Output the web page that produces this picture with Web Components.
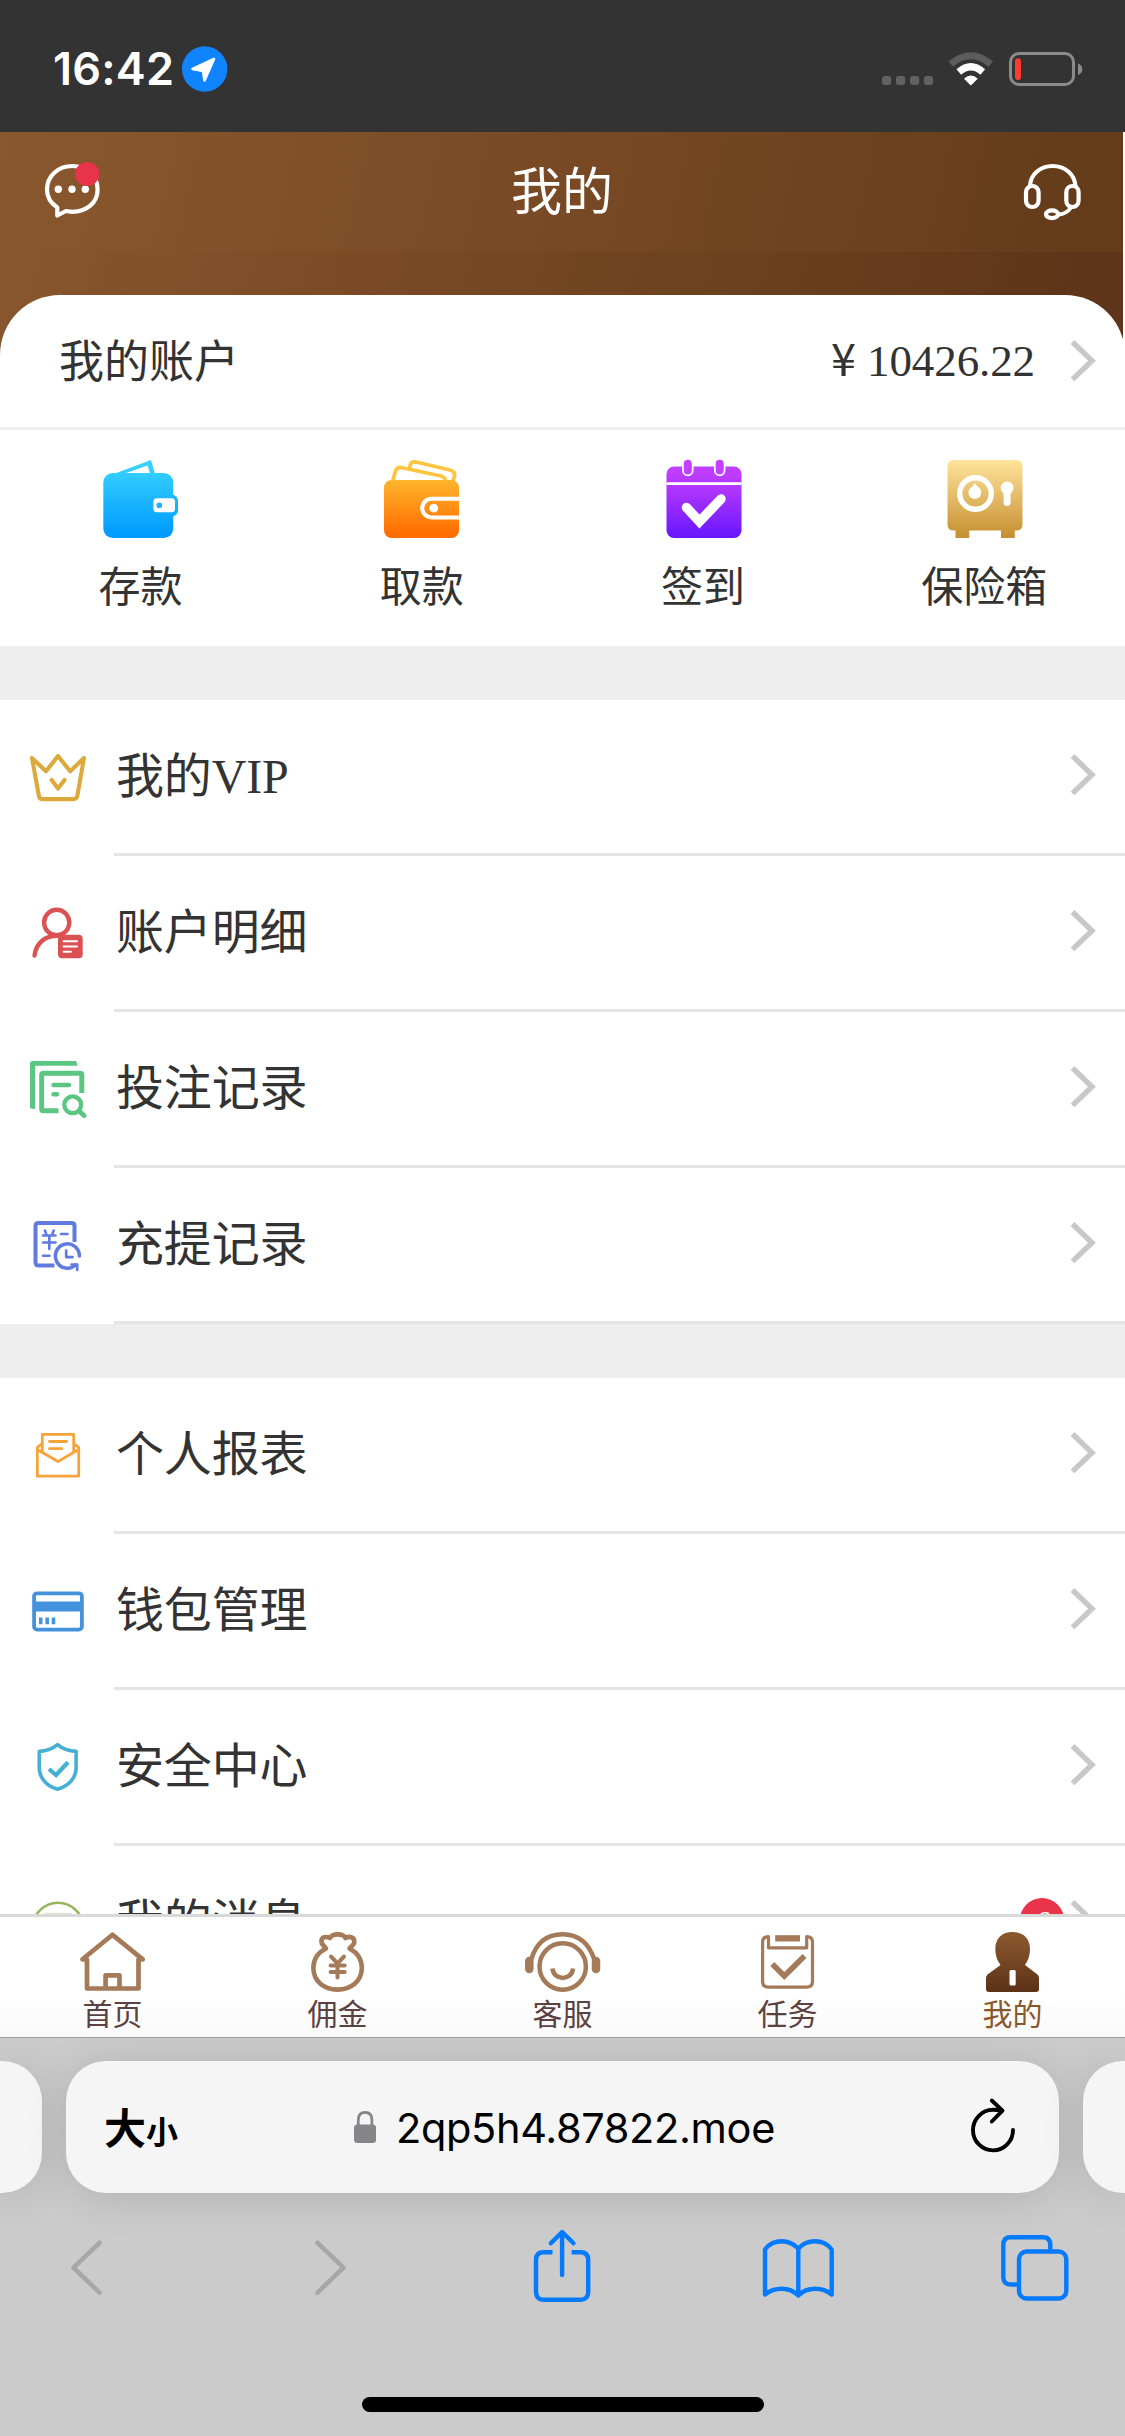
<!DOCTYPE html>
<html lang="zh-CN">
<head>
<meta charset="utf-8">
<title>我的</title>
<style>
html,body{margin:0;padding:0}
body{width:1125px;height:2436px;overflow:hidden;background:#fff;color:#333;font-family:"Liberation Serif","Noto Sans CJK SC",serif}
svg{display:block;fill:none;stroke-linecap:round;stroke-linejoin:round}
</style>
</head>
<body>
<app-screen>
  <status-bar time="16:42"></status-bar>
  <page-header>我的</page-header>
  <account-row label="我的账户" amount="10426.22"></account-row>
  <quick-actions>
    <quick-action label="存款">
      <svg width="281" height="120" viewBox="0 430 281 120"><defs><linearGradient id="gd" gradientUnits="userSpaceOnUse" x1="0" y1="466" x2="0" y2="534"><stop stop-color="#38d2ff"/><stop offset="1" stop-color="#009bff"/></linearGradient></defs>
        <path d="M111 475L151 460L155.500 476ZM126 473H150L147.500 465.500Z" fill="url(#gd)" fill-rule="evenodd"/><rect x="103.300" y="473" width="70" height="65" rx="9.500" fill="url(#gd)"/><rect x="160" y="494.700" width="18" height="21.500" rx="6" fill="url(#gd)"/><rect x="153.400" y="498.300" width="21.600" height="14" rx="3.500" fill="#fff"/><circle cx="159.300" cy="505.300" r="2.900" fill="#1fb0ff"/></svg>
    </quick-action>
    <quick-action label="取款">
      <svg width="281" height="120" viewBox="281 430 281 120"><defs><linearGradient id="gw" gradientUnits="userSpaceOnUse" x1="0" y1="480" x2="0" y2="534"><stop stop-color="#ffb52d"/><stop offset="1" stop-color="#ff6c00"/></linearGradient></defs>
        <path d="M392.500 482L395.500 471Q397 467 401 467.500L441 476Q445 477 446 482M410 467.500V466Q410.500 461.500 416 462L450 470Q455.500 472 454.500 476L452.500 482" stroke="#ffc53e" stroke-width="3.800"/><rect x="384" y="480" width="75" height="58" rx="7.500" fill="url(#gw)"/><path d="M459 498.800H431.500A9.300 9.300 0 0 0 431.500 517.400H459" stroke="#fff" stroke-width="4" stroke-linecap="butt"/><circle cx="433.700" cy="508.200" r="4.400" fill="#fff"/></svg>
    </quick-action>
    <quick-action label="签到">
      <svg width="281" height="120" viewBox="562.500 430 281 120"><defs><linearGradient id="gs" gradientUnits="userSpaceOnUse" x1="0" y1="466" x2="0" y2="538"><stop stop-color="#c43fff"/><stop offset=".35" stop-color="#ad34ff"/><stop offset="1" stop-color="#6716ff"/></linearGradient></defs>
        <rect x="666" y="466.500" width="75" height="71.500" rx="7.500" fill="url(#gs)"/><path d="M666 483.600H741" stroke="#fff" stroke-width="2.600" stroke-linecap="butt"/><path d="M687.300 463V470.500M719.200 463V470.500" stroke="#fff" stroke-width="11.500"/><path d="M687.300 463.700V470.500M719.200 463.700V470.500" stroke="#c43fff" stroke-width="8"/><path d="M686 507.500L699 521.500L720.500 499" stroke="#fff" stroke-width="9.500" stroke-linejoin="miter"/></svg>
    </quick-action>
    <quick-action label="保险箱">
      <svg width="281" height="120" viewBox="843.500 430 281 120"><defs><linearGradient id="gb" gradientUnits="userSpaceOnUse" x1="0" y1="460" x2="0" y2="536"><stop stop-color="#ffe49b"/><stop offset="1" stop-color="#c79033"/></linearGradient></defs>
        <path d="M953 460H1016Q1022 460 1022 466V524.500Q1022 530.500 1016 530.500H1014.300V538H1000.500V530.500H968.700V538H955V530.500H953Q947 530.500 947 524.500V466Q947 460 953 460Z" fill="url(#gb)"/><circle cx="975" cy="493.500" r="15.800" stroke="#fff" stroke-width="5.400"/><path d="M974.300 483Q976 486 979 488Q981 490.500 980.600 493.500A6.400 6.400 0 0 1 968 493.500Q967.500 490.500 970 488Q973 486 974.300 483Z" fill="#fff"/><circle cx="1006.600" cy="488" r="6.400" fill="#fff"/><path d="M1006.600 490V502.500" stroke="#fff" stroke-width="7"/></svg>
    </quick-action>
  </quick-actions>

  <menu-group>
    <menu-row label="我的VIP"><svg width="116" height="156" viewBox="0 700 116 156" stroke="#dba93c" stroke-width="4.100"><path d="M32 758L46 771.300L58 756L70.200 771.300L84 758L77.300 796Q76.800 799.100 73.500 799.100H42.500Q39.500 799.100 38.900 796ZM51.700 780L58 788.500L64.500 780"/></svg></menu-row>
    <menu-row label="账户明细"><svg width="116" height="156" viewBox="0 856 116 156" stroke="#dc5152" stroke-width="4.400"><ellipse cx="56.700" cy="922.500" rx="12.600" ry="12.800"/><path d="M34.500 955.500C36 943 45 935.800 57 935.800"/><rect x="58" y="934.700" width="24.700" height="23.600" rx="4" fill="#dc5152" stroke="none"/><path d="M63.500 941.200H77M63.500 946.500H77M63.500 951.700H71" stroke="#fff" stroke-width="1.900"/></svg></menu-row>
    <menu-row label="投注记录"><svg width="116" height="156" viewBox="0 1012 116 156" stroke="#5bc681" stroke-width="5"><path d="M76 1061Q77 1063 77.500 1065.700H35.200V1109Q32 1109 30 1108V1064Q30 1061 33 1061Z" fill="#5bc681" stroke="none"/><path d="M81.800 1093V1075Q81.800 1073.200 80 1073.200H43.500Q41.700 1073.200 41.700 1075V1109Q41.700 1110.800 43.500 1110.800H58.500" stroke-linecap="butt"/><path d="M53.500 1085H69M53.500 1094.200H57" stroke-width="4.400"/><circle cx="72.700" cy="1104.800" r="8.400" stroke-width="4.300"/><path d="M79.500 1111.500L84 1115.500"/></svg></menu-row>
    <menu-row label="充提记录"><svg width="116" height="156" viewBox="0 1168 116 156" stroke="#607adf" stroke-width="4"><path d="M74.500 1242V1226Q74.500 1223 71.500 1223H38.500Q35.500 1223 35.500 1226V1262Q35.500 1265.500 38.500 1265.500H54.500" stroke-linecap="butt"/><path d="M43 1235.500H55.500M43 1242.500H55.500M49.300 1235.500V1249M45 1230.500L46.500 1235M53.700 1230.500L52 1235M61 1234H67.500M43 1255.800H49.500" stroke-width="2.600"/><path d="M79.400 1256A12 12.200 0 1 0 75.500 1265" stroke-width="3.600"/><path d="M71.500 1264.500H77.200V1270M66.200 1250.500V1257.200H72.500" stroke-width="2.700"/></svg></menu-row>
  </menu-group>

  <menu-group>
    <menu-row label="个人报表"><svg width="116" height="156" viewBox="0 1378 116 156" stroke="#f6a43a" stroke-width="2.800"><path d="M42 1443.500L37.300 1447.500V1476.200H78.700V1447.500L74 1443.500M37.300 1449.500L58 1461.500L78.700 1449.500M42.300 1451.500V1434.400H73.700V1451.500M49.500 1441.500H66.700M49.500 1448.700H61.800"/></svg></menu-row>
    <menu-row label="钱包管理"><svg width="116" height="156" viewBox="0 1534 116 156" stroke="#4592dc" stroke-width="3.800"><rect x="34.100" y="1593.300" width="47.800" height="36.300" rx="3"/><path d="M33 1606.400H83" stroke-width="10" stroke-linecap="butt"/><path d="M40.700 1617.500V1624.300M47.200 1617.500V1624.300M53.500 1617.500V1624.300" stroke-width="3.500" stroke-linecap="butt"/></svg></menu-row>
    <menu-row label="安全中心"><svg width="116" height="156" viewBox="0 1690 116 156" stroke="#46b0d4" stroke-width="3.600"><path d="M57.500 1744.700Q50 1751 39.300 1751.400V1768C39.300 1779 48 1786.500 57.500 1789.200C67 1786.500 76.100 1779 76.100 1768V1751.400Q65 1751 57.500 1744.700Z"/><path d="M49 1769L56 1775L68 1762.200" stroke-width="4.200" stroke-linecap="butt" stroke-linejoin="miter"/></svg></menu-row>
    <menu-row label="我的消息" badge="6"><svg width="116" height="156" viewBox="0 1846 116 156" stroke="#96b65c" stroke-width="2.600"><circle cx="58" cy="1928" r="25.300"/><path d="M45 1914H71" stroke="#dfe6cd"/></svg></menu-row>
  </menu-group>

  <tab-bar slot="tabs">
    <tab-item label="首页"><svg width="225" height="78" viewBox="0 1917 225 78" stroke="#a57a58" stroke-width="4.700"><path d="M82.500 1959.300L112.500 1934.800L142.700 1959.300M82.500 1959.500H87V1988.500H138.500V1959.500H142.700M105.600 1988V1975.400H119.500V1988"/></svg></tab-item>
    <tab-item label="佣金"><svg width="225" height="78" viewBox="225 1917 225 78" stroke="#a57a58" stroke-width="4.600"><path d="M326 1948.500C317 1953 313.400 1960 313.400 1968C313.400 1981 324 1989.600 337.500 1989.600C351 1989.600 361.800 1981 361.800 1968C361.800 1960 358 1953 349.500 1948.500C352 1945.500 355 1944.500 354.300 1941C354 1936.800 349 1936 345.500 1938C343 1933.200 332.500 1933.200 330 1938C326 1936 321.500 1936.800 321.500 1941C321 1944.500 324 1945.500 326 1948.500Z"/><path d="M331 1956.500L337.500 1963.300L344 1956.500M337.500 1963.300V1977.500M330.600 1965.500H344.700M330.600 1972H344.700" stroke-width="4"/></svg></tab-item>
    <tab-item label="客服"><svg width="225" height="78" viewBox="450 1917 225 78" stroke="#a57a58" stroke-width="4.500"><circle cx="562.700" cy="1966.500" r="23.200"/><path d="M531 1960C536 1943 547 1934.200 562.500 1934.200C578 1934.200 589 1943 594.500 1960"/><path d="M529.300 1961V1969M596 1961V1969" stroke-width="8.500"/><path d="M552.500 1968.500C553.500 1981 572 1981 573 1968.500" stroke-linecap="butt"/></svg></tab-item>
    <tab-item label="任务"><svg width="225" height="78" viewBox="675 1917 225 78" stroke="#a57a58" stroke-width="3.200"><path d="M768.500 1936.600Q762.600 1936.600 762.600 1942V1981.500Q762.600 1987.200 768.500 1987.200H806.500Q812.500 1987.200 812.500 1981.500V1942Q812.500 1936.600 806.700 1936.600V1947.800H768.500Z"/><rect x="775.200" y="1935.200" width="24.800" height="6.300" fill="#a57a58" stroke="none"/><path d="M772.300 1964L784.300 1976L804.500 1956" stroke-width="5.600" stroke-linecap="butt" stroke-linejoin="miter"/></svg></tab-item>
    <tab-item label="我的" active><svg width="225" height="78" viewBox="900 1917 225 78"><defs><linearGradient id="gm" x1="0" y1="0" x2="0" y2="1"><stop stop-color="#8d5a2e"/><stop offset="1" stop-color="#5b3217"/></linearGradient></defs><path d="M1012.600 1932C1023 1932 1030 1938 1030 1949Q1030 1958 1025 1965L1037.500 1974.500Q1039 1976 1039 1978V1989Q1039 1992 1036 1992H989Q986 1992 986 1989V1978Q986 1976 987.500 1974.500L1000.500 1965Q995.300 1958 995.300 1949C995.300 1938 1002 1932 1012.600 1932Z" fill="url(#gm)"/><rect x="1009.500" y="1970" width="6.200" height="15.500" rx="1.500" fill="#fff"/></svg></tab-item>
  </tab-bar>
  <browser-bar slot="browser" url="2qp5h4.87822.moe"></browser-bar>
</app-screen>

<script>
const SVG_BASE = 'svg{display:block;fill:none;stroke-linecap:round;stroke-linejoin:round;flex:none}';
function define(name, render) {
  customElements.define(name, class extends HTMLElement {
    constructor() { super(); this.attachShadow({ mode: 'open' }); }
    connectedCallback() {
      const t = document.createElement('template');
      t.innerHTML = render(this);
      this.shadowRoot.replaceChildren(t.content.cloneNode(true));
    }
  });
}
const chevron = '<svg width="90" height="60" viewBox="1035 331 90 60"><path d="M1072.500 342L1092 360.700L1072.500 379.400" stroke="#c8c8cc" stroke-width="5.400" stroke-linecap="butt" stroke-linejoin="miter"/></svg>';

define('app-screen', () => `<style>
  :host{display:flex;flex-direction:column;width:1125px;height:2436px}
  main{flex:none;height:1914px;overflow:hidden;display:flex;flex-direction:column}
  </style><main><slot></slot></main><slot name="tabs"></slot><slot name="browser"></slot>`);

define('status-bar', el => `<style>${SVG_BASE}
  :host{display:flex;flex:none;height:132px;background:#333;color:#fff;align-items:center;justify-content:space-between}
  .l{display:flex;align-items:center;padding-left:53px;height:132px}
  b{font:600 45px/60px Inter,sans-serif;letter-spacing:.2px;width:129px;padding-top:5px;white-space:nowrap}
  </style><div class="l"><b>${el.getAttribute('time')}</b>
  <svg width="46" height="132" viewBox="182 0 46 132"><circle cx="204.700" cy="69" r="22.700" fill="#0f84fe"/><path d="M214 59L192.500 69L203 71L204.500 80.500Z" fill="#fff" stroke="#fff" stroke-width="2.600"/></svg></div>
  <svg width="253" height="132" viewBox="872 0 253 132"><g fill="#626262"><rect x="882" y="76" width="9.300" height="9" rx="3"/><rect x="896" y="76" width="9.300" height="9" rx="3"/><rect x="910" y="76" width="9.300" height="9" rx="3"/><rect x="923.800" y="76" width="9.300" height="9" rx="3"/></g>
  <g stroke-linecap="butt" stroke-width="7"><path d="M950.800 64Q970.800 47.500 990.800 64" stroke="#5c5c5c"/><path d="M958.800 72Q970.800 61.500 982.800 72" stroke="#fff"/></g><path d="M964 78.800Q970.800 72 977.800 78.800L970.800 85.500Z" fill="#fff"/>
  <rect x="1010.500" y="53.500" width="63" height="31" rx="8.500" stroke="#8b8b8b" stroke-width="3"/><rect x="1015" y="58.300" width="6" height="21.700" rx="3" fill="#ff3a30"/><path d="M1078 63.500Q1082.300 65 1082.300 69.300Q1082.300 73.500 1078 75Z" fill="#8b8b8b"/></svg>`);

define('page-header', () => `<style>${SVG_BASE}
  :host{display:block;flex:none;height:163px;width:1123px;background:linear-gradient(106deg,#8a582e 0,#7d4b26 30%,#6d421f 62%,#5e3518 95%);padding-bottom:70px;margin-bottom:-70px}
  header{display:flex;align-items:center;justify-content:space-between;height:120px;background:linear-gradient(103deg,#8a582e 0,#784924 50%,#643c1a 96%)}
  h1{margin:0;font-weight:400;font-size:51px;line-height:70px;color:#fff;font-family:"Noto Sans CJK SC",sans-serif;padding-bottom:8px;padding-left:1px}
  </style><header>
  <svg width="150" height="120" viewBox="0 132 150 120" stroke="#fff" stroke-width="4.200"><path d="M57.300 215.500V207.500C50.500 203 47 197 47 189.500C47 176 58 166 72.300 166C86.500 166 97.600 176 97.600 189.500C97.600 203 86.500 211.800 72.300 211.800L66 211Z"/><g fill="#fff" stroke="none"><circle cx="58.300" cy="189.300" r="3.700"/><circle cx="72" cy="189.300" r="3.700"/><circle cx="85.300" cy="189.300" r="3.700"/></g><circle cx="87.200" cy="174" r="12.100" fill="#e9334a" stroke="none"/></svg>
  <h1><slot></slot></h1>
  <svg width="150" height="120" viewBox="973 132 150 120" stroke="#fff" stroke-width="4.200"><path d="M1030 186C1030.500 174 1040.500 166 1052.600 166C1065 166 1074.500 174 1075.500 186"/><rect x="1026" y="186" width="12.600" height="21" rx="6.300"/><rect x="1066.300" y="186" width="12.300" height="21" rx="6.150"/><ellipse cx="1052" cy="214.300" rx="6" ry="3.900"/><path d="M1059 214.500Q1067 213.500 1071 207.500" stroke-width="3.800"/></svg>
  </header>`);

define('account-row', el => `<style>${SVG_BASE}
  :host{display:flex;flex:none;height:132px;background:#fff;border-bottom:3px solid #eee;border-radius:60px 60px 0 0;align-items:center;font-size:45px;line-height:60px;padding-left:59px;z-index:1}
  .n{padding-top:3px}
  .a{margin-left:auto;white-space:pre;padding-right:1px;margin-right:-1px;letter-spacing:-.1px}
  .y{font-family:"Noto Sans CJK SC",sans-serif;line-height:1px}
  </style><span class="n">${el.getAttribute('label')}</span><span class="a"><span class="y">¥</span> ${el.getAttribute('amount')}</span>${chevron}`);

define('quick-actions', () => `<style>:host{display:grid;flex:none;grid-template-columns:repeat(4,1fr);height:216px;background:#fff;z-index:1}</style><slot></slot>`);
define('quick-action', el => `<style>:host{display:flex;flex-direction:column;align-items:center}
  span{font-size:42px;line-height:60px;margin-top:8px}</style><slot></slot><span>${el.getAttribute('label')}</span>`);

define('menu-group', () => `<style>:host{display:block;flex:none;border-top:54px solid #eee;background:#fff}</style><slot></slot>`);
define('menu-row', el => `<style>${SVG_BASE}
  :host{display:flex;height:156px;background:linear-gradient(#e5e5e5,#e5e5e5) 114px 153px/1011px 3px no-repeat;}
  .t{display:flex;flex:1;height:153px;align-items:center;font-size:48px;line-height:60px;}
  .t>span{padding-top:1px;letter-spacing:-.150px}
  .r{margin-left:auto;display:flex;align-items:center}
  i{width:44px;height:44px;border-radius:50%;background:#e9334a;color:#fff;font-size:29px;line-height:47px;text-align:center;margin-right:-29px;margin-bottom:6px}
  .r svg{margin-bottom:3px}
  </style><slot></slot><div class="t"><span>${el.getAttribute('label')}</span><div class="r">${el.hasAttribute('badge') ? '<i>' + el.getAttribute('badge') + '</i>' : ''}${chevron}</div></div>`);

define('tab-bar', () => `<style>:host{display:grid;flex:none;grid-template-columns:repeat(5,225px);height:120px;border-top:3px solid #d9d9d9;border-bottom:1px solid #9c9c9c;background:linear-gradient(#fff 65%,#f9f9f9)}</style><slot></slot>`);
define('tab-item', el => `<style>:host{display:flex;flex-direction:column;align-items:center;color:#5c4141}:host([active]){color:#8a572b}
  span{font-size:30px;line-height:40px}</style><slot></slot><span>${el.getAttribute('label')}</span>`);

define('browser-bar', el => `<style>${SVG_BASE}
  :host{display:flex;flex-direction:column;flex:1;background:#cbcbcb;overflow:hidden;font-family:Inter,"Noto Sans CJK SC",sans-serif;color:#000}
  .tabs{display:grid;grid-template-columns:42px 993px 42px;gap:24px;height:132px;padding-top:23px;flex:none}
  .tabs>div{background:#f5f5f5;border-radius:40px;box-shadow:0 4px 42px rgba(0,0,0,.13)}
  .tabs>.p{border-radius:0 40px 40px 0}.tabs>.n{border-radius:40px 0 0 40px}
  .u{display:flex;align-items:center}
  .sz{font-family:"Noto Sans CJK SC",sans-serif;font-weight:700;font-size:42px;line-height:60px;padding-left:38px;padding-top:2px;width:215px;box-sizing:border-box;display:flex;align-items:baseline}
  .sz small{font-size:32px}
  .url{font-size:41.500px;line-height:60px;white-space:nowrap;padding-left:20px;padding-top:1px;letter-spacing:-.350px}
  .rel{margin-left:auto}
  nav{display:flex;height:160px;margin-top:7px}
  .home{width:402px;height:15px;border-radius:8px;background:#000;margin:37px auto 0 362px}
  </style>
  <div class="tabs"><div class="p"></div><div class="u"><div class="sz">大<small>小</small></div>
  <svg width="95" height="132" viewBox="281 2061 95 132"><rect x="354" y="2124.500" width="22.200" height="18.500" rx="3.500" fill="#868688"/><path d="M358.300 2126V2120Q358.300 2112.300 365.100 2112.300Q371.900 2112.300 371.900 2120V2126" stroke="#868688" stroke-width="2.800"/></svg>
  <span class="url">${el.getAttribute('url')}</span>
  <svg class="rel" width="110" height="132" viewBox="949 2061 110 132" stroke="#000" stroke-width="3.900"><path d="M1013 2130A20 20.300 0 1 1 993 2109.800Q998 2109.800 1001.500 2111M991.800 2100.500L1002.500 2110.700L991.800 2121.500"/></svg></div><div class="n"></div></div>
  <nav><svg width="209" height="160" viewBox="0 2200 209 160" stroke="#a7a7a7" stroke-width="4.600"><path d="M99.500 2242.800L73.500 2267.700L99.500 2292.600"/></svg>
  <svg width="238" height="160" viewBox="209 2200 238 160" stroke="#a7a7a7" stroke-width="4.600"><path d="M317.500 2242.800L343.500 2267.700L317.500 2292.600"/></svg>
  <svg width="230" height="160" viewBox="447 2200 230 160" stroke="#047aff" stroke-width="4.400"><path d="M552.500 2252.300H543.500Q536 2252.300 536 2260V2292Q536 2299.700 543.500 2299.700H580.500Q588.200 2299.700 588.200 2292V2260Q588.200 2252.300 580.500 2252.300H571.700" stroke-linecap="butt"/><path d="M562.100 2275V2232.500M550.800 2243.300L562.100 2232L573.500 2243.300"/></svg>
  <svg width="240" height="160" viewBox="677 2200 240 160" stroke="#047aff" stroke-width="4.400"><path d="M798.300 2248.500Q791 2241.300 782 2241.300Q771 2241.300 765 2249.500V2294.500Q772 2288.700 782 2288.700Q791.500 2288.700 798.300 2295.500Q805 2288.700 815 2288.700Q825 2288.700 831.700 2294.500V2249.500Q825.500 2241.300 815 2241.300Q805 2241.300 798.300 2248.500V2295.500"/></svg>
  <svg width="208" height="160" viewBox="917 2200 208 160" stroke="#047aff" stroke-width="4.400"><path d="M1017 2284.500H1010.500Q1003.300 2284.500 1003.300 2277V2245Q1003.300 2237.300 1010.500 2237.300H1043Q1050.300 2237.300 1050.300 2245V2250.500"/><rect x="1019" y="2251.500" width="47.300" height="47" rx="7.500"/></svg></nav>
  <div class="home"></div>`);
</script>
</body>
</html>
